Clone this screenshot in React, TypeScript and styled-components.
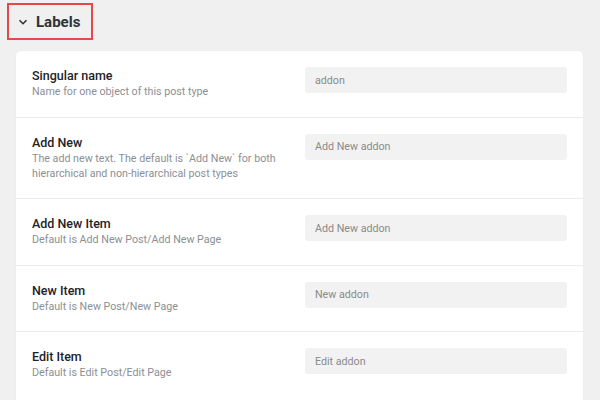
import React from "react";
import styled, { createGlobalStyle } from "styled-components";

const Global = createGlobalStyle`
  html, body { margin: 0; padding: 0; background: #f0f0f0; }
  body { font-family: Roboto, "Liberation Sans", sans-serif; overflow: hidden; }
`;

const Page = styled.div`
  width: 600px;
  height: 400px;
  background: #f0f0f0;
  display: flex;
  flex-direction: column;
  overflow: hidden;
  & > * { flex-shrink: 0; }
`;

const SectionHead = styled.div`
  margin: 3px 0 0 7px;
  width: 86px;
  height: 37px;
  box-sizing: border-box;
  border: 2px solid #e8474a;
  display: flex;
  align-items: center;
  gap: 8px;
  padding-left: 9px;
  font-size: 15px;
  font-weight: 700;
  color: #2c3338;
`;

const Card = styled.div`
  margin: 11px 17px 0 16px;
  background: #fff;
  border-radius: 5px;
  box-shadow: 0 0 2px rgba(0, 0, 0, 0.04);
`;

const Row = styled.div<{ $last?: boolean }>`
  display: grid;
  grid-template-columns: 1fr 262px;
  column-gap: 14px;
  align-items: start;
  padding: 17px 16px ${(p) => (p.$last ? "24px" : "17.5px")};
  border-bottom: ${(p) => (p.$last ? "none" : "1px solid #ebebeb")};
`;

const Title = styled.div`
  font-size: 12.5px;
  font-weight: 500;
  line-height: 16px;
  color: #1d2327;
`;

const Desc = styled.div`
  font-size: 10.7px;
  line-height: 15px;
  color: #8c8f94;
`;

const Field = styled.input`
  box-sizing: border-box;
  width: 100%;
  height: 26px;
  margin-top: -1px;
  border: none;
  border-radius: 3px;
  background: #f2f2f2;
  padding: 0 10px;
  font-family: Roboto, "Liberation Sans", sans-serif;
  font-size: 10.7px;
  color: #333;
  outline: none;
  &::placeholder { color: #8a8a8a; }
`;

const rows = [
  { t: "Singular name", d: "Name for one object of this post type", p: "addon" },
  {
    t: "Add New",
    d: "The add new text. The default is `Add New` for both hierarchical and non-hierarchical post types",
    p: "Add New addon",
  },
  { t: "Add New Item", d: "Default is Add New Post/Add New Page", p: "Add New addon" },
  { t: "New Item", d: "Default is New Post/New Page", p: "New addon" },
  { t: "Edit Item", d: "Default is Edit Post/Edit Page", p: "Edit addon" },
];

export default function App() {
  return (
    <Page>
      <Global />
      <SectionHead>
        <svg width="10" height="10" viewBox="0 0 10 10">
          <path d="M1.5 3.2 L5 6.7 L8.5 3.2" fill="none" stroke="#2c3338" strokeWidth="1.6" />
        </svg>
        Labels
      </SectionHead>
      <Card>
        {rows.map((r, i) => (
          <Row key={r.t} $last={i === rows.length - 1}>
            <div>
              <Title>{r.t}</Title>
              <Desc>{r.d}</Desc>
            </div>
            <Field placeholder={r.p} />
          </Row>
        ))}
      </Card>
    </Page>
  );
}
